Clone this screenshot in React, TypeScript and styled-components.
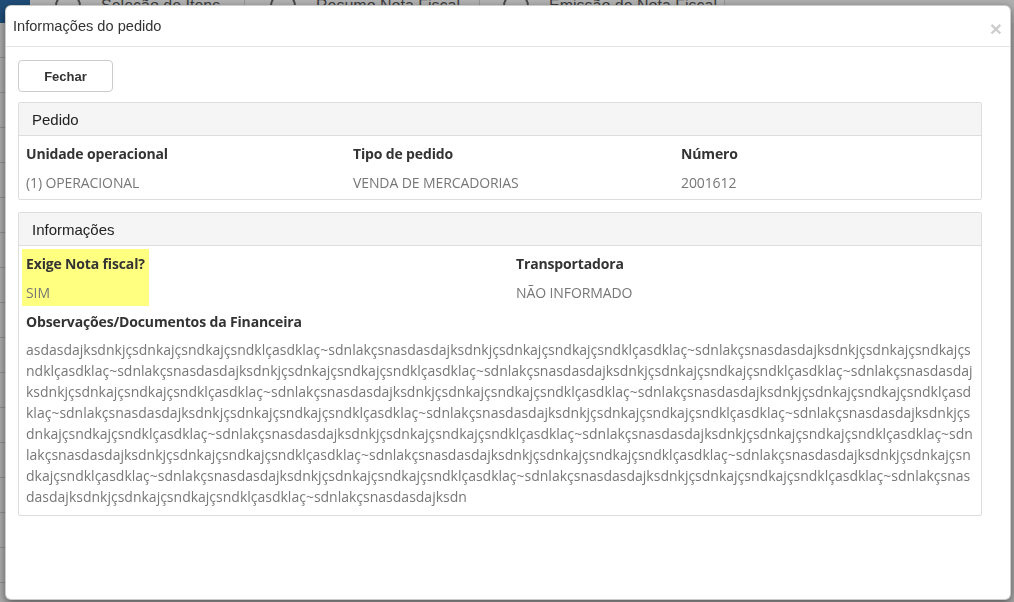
import React from "react";
import styled, { createGlobalStyle } from "styled-components";

const GlobalStyle = createGlobalStyle`
  html, body { margin: 0; padding: 0; }
  body {
    font-family: "Open Sans", "Liberation Sans", Arial, sans-serif;
    background: #ffffff;
    overflow: hidden;
  }
  * { box-sizing: border-box; }
`;

/* ---------- background page (behind the dialog) ---------- */

const Page = styled.div`
  width: 100vw;
  height: 100vh;
  display: flex;
  flex-direction: column;
  background: #e9e9e9;
`;

const TopBar = styled.div`
  display: flex;
  align-items: center;
  height: 34px;
  margin-top: -11px;
  background: #f2f2f2;
`;

const Logo = styled.div`
  width: 30px;
  height: 50px;
  align-self: flex-start;
  background: #2b6aa6;
`;

const Tab = styled.div<{ $w: number; $pad: number }>`
  display: flex;
  align-items: center;
  gap: 20px;
  width: ${(p) => p.$w}px;
  height: 100%;
  padding-left: ${(p) => p.$pad}px;
  border-right: 1px solid #d0d0d0;
  background: #f7f7f7;
  font-family: "Liberation Sans", Arial, sans-serif;
  font-size: 16px;
  color: #555;
  white-space: nowrap;
`;

const Circle = styled.span`
  width: 26px;
  height: 26px;
  border: 2px solid #666;
  border-radius: 50%;
  flex: none;
`;

const PageBody = styled.div`
  flex: 1;
  display: flex;
`;

const SideRows = styled.div`
  width: 30px;
  display: flex;
  flex-direction: column;
  background: #efefef;
`;

const SideRow = styled.div`
  height: 35px;
  border-bottom: 1px solid #c9c9c9;
`;

const Overlay = styled.div`
  position: fixed;
  inset: 0;
  background: rgba(0, 0, 0, 0.28);
`;

/* ---------- dialog ---------- */

const Dialog = styled.div`
  position: fixed;
  top: 5px;
  left: 5px;
  width: 1006px;
  height: 595px;
  background: #fff;
  border: 1px solid rgba(0, 0, 0, 0.2);
  border-radius: 6px;
  box-shadow: 0 3px 9px rgba(0, 0, 0, 0.5);
  display: flex;
  flex-direction: column;
`;

const DialogHeader = styled.div`
  height: 41px;
  display: flex;
  align-items: center;
  justify-content: space-between;
  padding: 0 8px 0 7px;
  border-bottom: 1px solid #e5e5e5;
`;

const Title = styled.h4`
  margin: 0;
  font-family: "Liberation Sans", Arial, sans-serif;
  font-size: 14.6px;
  font-weight: 400;
  color: #333;
`;

const Close = styled.button`
  border: 0;
  background: none;
  padding: 0;
  margin-top: 5px;
  font-family: "Liberation Sans", Arial, sans-serif;
  font-size: 21px;
  font-weight: 700;
  line-height: 1;
  color: #000;
  opacity: 0.2;
  cursor: pointer;
`;

const DialogBody = styled.div`
  padding: 13px 28px 13px 12px;
  display: flex;
  flex-direction: column;
  align-items: flex-start;
`;

const Button = styled.button`
  width: 95px;
  height: 32px;
  background: #fff;
  border: 1px solid #ccc;
  border-radius: 4px;
  font-family: "Liberation Sans", Arial, sans-serif;
  font-size: 13px;
  font-weight: 700;
  color: #333;
  margin-bottom: 10px;
`;

const Panel = styled.section<{ $gap?: number }>`
  align-self: stretch;
  border: 1px solid #dddddd;
  border-radius: 2px;
  margin-bottom: ${(p) => p.$gap ?? 0}px;
`;

const PanelHeading = styled.div`
  height: 33px;
  display: flex;
  align-items: center;
  padding: 0 13px;
  background: #f5f5f5;
  border-bottom: 1px solid #dddddd;
  font-family: "Liberation Sans", Arial, sans-serif;
  font-size: 15px;
  color: #222;
`;

const PanelBody = styled.div<{ $pad: string }>`
  padding: ${(p) => p.$pad};
`;

const Grid = styled.div<{ $cols: string }>`
  display: grid;
  grid-template-columns: ${(p) => p.$cols};
  align-items: start;
`;

const Field = styled.div`
  display: flex;
  flex-direction: column;
  align-items: flex-start;
`;

const FieldInner = styled.div<{ $highlight?: boolean }>`
  display: inline-flex;
  flex-direction: column;
  gap: 9px;
  padding: 5px 4px 3px;
  background: ${(p) => (p.$highlight ? "#ffff80" : "transparent")};
`;

const Label = styled.div`
  font-family: "Open Sans", sans-serif;
  font-size: 14px;
  font-weight: 700;
  line-height: 20px;
  color: #333;
  letter-spacing: -0.15px;
`;

const Value = styled.div`
  font-family: "Open Sans", sans-serif;
  font-size: 14px;
  line-height: 20px;
  color: #777;
  letter-spacing: -0.1px;
`;

const ObsLabel = styled(Label)`
  padding: 0 4px;
  margin-top: 6px;
`;

const LongText = styled.p`
  margin: 7px 0 0;
  padding: 0 4px;
  font-family: "Open Sans", sans-serif;
  font-size: 14px;
  line-height: 21px;
  color: #777;
  word-break: break-all;
`;

const unit = "asdasdajksdnkjçsdnkajçsndkajçsndklçasdklaç~sdnlakçsn";
const longText = unit.repeat(19) + "asdasdajksdn";

export default function App() {
  return (
    <>
      <GlobalStyle />
      <Page>
        <TopBar>
          <Logo />
          <Tab $w={215} $pad={25}>
            <Circle />
            Seleção de Itens
          </Tab>
          <Tab $w={235} $pad={25}>
            <Circle />
            Resumo Nota Fiscal
          </Tab>
          <Tab $w={245} $pad={23}>
            <Circle />
            Emissão de Nota Fiscal
          </Tab>
        </TopBar>
        <PageBody>
          <SideRows>
            {Array.from({ length: 16 }).map((_, i) => (
              <SideRow key={i} />
            ))}
          </SideRows>
        </PageBody>
      </Page>
      <Overlay />
      <Dialog role="dialog" aria-label="Informações do pedido">
        <DialogHeader>
          <Title>Informações do pedido</Title>
          <Close aria-label="Fechar">×</Close>
        </DialogHeader>
        <DialogBody>
          <Button>Fechar</Button>
          <Panel $gap={12}>
            <PanelHeading>Pedido</PanelHeading>
            <PanelBody $pad="3px 3px 3px 3px">
              <Grid $cols="327px 328px 1fr">
                <FieldInner>
                  <Label>Unidade operacional</Label>
                  <Value>(1) OPERACIONAL</Value>
                </FieldInner>
                <FieldInner>
                  <Label>Tipo de pedido</Label>
                  <Value>VENDA DE MERCADORIAS</Value>
                </FieldInner>
                <FieldInner>
                  <Label>Número</Label>
                  <Value>2001612</Value>
                </FieldInner>
              </Grid>
            </PanelBody>
          </Panel>
          <Panel>
            <PanelHeading>Informações</PanelHeading>
            <PanelBody $pad="3px 3px 8px 3px">
              <Grid $cols="490px 1fr">
                <Field>
                  <FieldInner $highlight>
                    <Label>Exige Nota fiscal?</Label>
                    <Value>SIM</Value>
                  </FieldInner>
                </Field>
                <Field>
                  <FieldInner>
                    <Label>Transportadora</Label>
                    <Value>NÃO INFORMADO</Value>
                  </FieldInner>
                </Field>
              </Grid>
              <ObsLabel>Observações/Documentos da Financeira</ObsLabel>
              <LongText>{longText}</LongText>
            </PanelBody>
          </Panel>
        </DialogBody>
      </Dialog>
    </>
  );
}
